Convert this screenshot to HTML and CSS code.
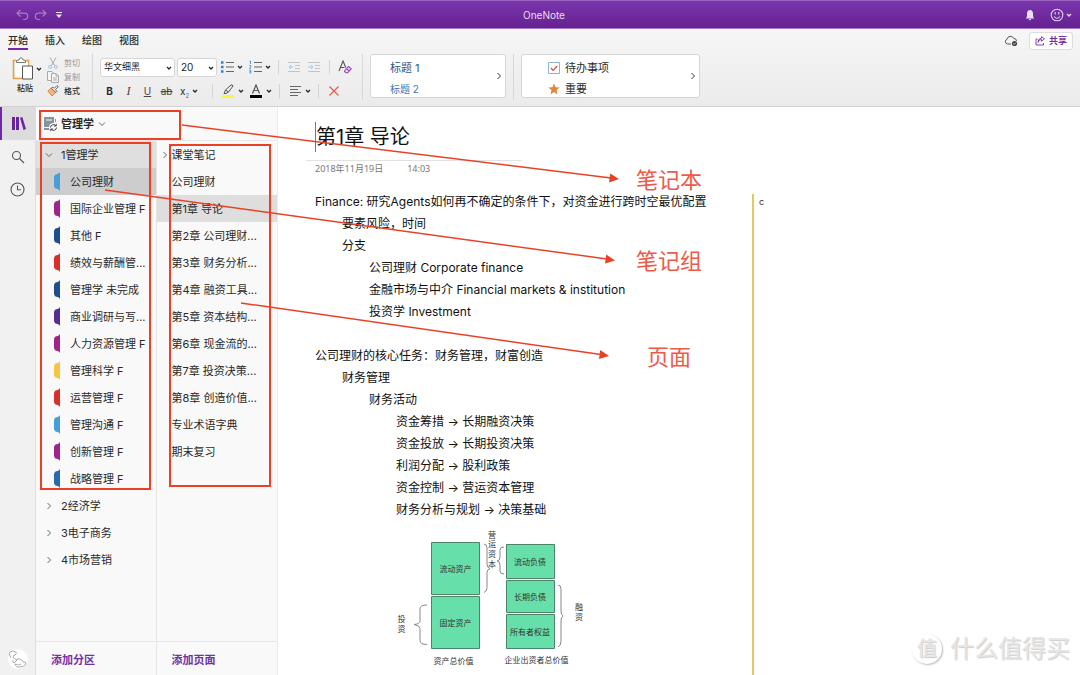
FILE: index.html
```html
<!DOCTYPE html>
<html lang="zh-CN">
<head>
<meta charset="utf-8">
<meta name="viewport" content="width=device-width, initial-scale=1">
<title>OneNote</title>
<link rel="stylesheet" href="styles.css">
</head>
<body>
<svg width="0" height="0" class="defs" aria-hidden="true">
  <symbol id="chev" viewBox="0 0 6 6"><path d="M1 2l2 2 2-2" fill="none" stroke="currentColor" stroke-width="1.3"/></symbol>
  <symbol id="down" viewBox="0 0 8 8"><path d="M1 2.500l3 3 3-3" fill="none" stroke="currentColor"/></symbol>
  <symbol id="right" viewBox="0 0 8 8"><path d="M2.500 1l3 3-3 3" fill="none" stroke="currentColor"/></symbol>
  <symbol id="tab" viewBox="0 0 6 19"><path d="M6 0v19L4.800 17.500 1 16.200 0 14V5L1 2.800 4.800 1.500z" fill="currentColor"/></symbol>
</svg>

<header class="titlebar">
  <div class="quick">
    <button aria-label="撤销"><svg width="13" height="12" viewBox="0 0 13 12" fill="none" stroke="#a67cc9" stroke-width="1.200"><path d="M4.500 1L1 4.200l3.500 3.300M1 4.200h7.500a3 3 0 0 1 0 6.300H7"/></svg></button>
    <button aria-label="重做"><svg width="13" height="12" viewBox="0 0 13 12" fill="none" stroke="#a67cc9" stroke-width="1.200"><path d="M8.500 1L12 4.200 8.500 7.500M12 4.200H4.500a3 3 0 0 0 0 6.300H6"/></svg></button>
    <button aria-label="自定义"><svg width="8" height="8" viewBox="0 0 8 8" fill="#f0e6f8"><path d="M1 1h6v1H1zM1 3.500h6L4 7z"/></svg></button>
  </div>
  <h1 class="app-name">OneNote</h1>
  <div class="account">
    <button aria-label="通知"><svg width="10" height="12" viewBox="0 0 10 12" fill="#ecdff5"><path d="M1 9c.8-.8 1-1.500 1-4.500C2 2.500 3.200 1 5 1s3 1.500 3 3.500C8 7.500 8.200 8.200 9 9v.6H1zM3.700 10h2.600q-.3 1.200-1.300 1.200T3.700 10z"/></svg></button>
    <button class="face" aria-label="反馈"><svg width="14" height="14" viewBox="0 0 14 14" fill="none" stroke="#e3d2f0" stroke-width="1.100"><circle cx="7" cy="7" r="5.800"/><path d="M5.200 4v2.500M8.800 4v2.500M4 8.500q3 3.500 6 0"/></svg><svg width="6" height="6"><use href="#chev"/></svg></button>
  </div>
</header>

<section class="ribbon">
  <div class="tabrow">
    <nav class="tabs">
      <button class="active">开始</button><button>插入</button><button>绘图</button><button>视图</button>
    </nav>
    <div class="sharing">
      <svg width="14" height="12" viewBox="0 0 14 12" fill="none" stroke="#555"><path d="M7 9H3.500A2.500 2.500 0 0 1 3 4.200 3.600 3.600 0 0 1 9.800 3.500 2.600 2.600 0 0 1 12.500 6"/><circle cx="10.500" cy="8.500" r="2.600" fill="#444" stroke="none"/><path d="M9.300 8.500l1 .9 1.500-1.700" stroke="#fff" stroke-width=".7"/></svg>
      <button class="share"><svg width="10" height="10" viewBox="0 0 10 10" fill="none" stroke="#7330a5" stroke-width=".9"><path d="M2.500 3H1v6h7.500V7M3 6.500Q3.500 3.500 6.500 3.500V5.200L9.500 2.800 6.500.6v1.500Q3 2.300 3 6.500z"/></svg>共享</button>
    </div>
  </div>

  <div class="toolbar">
    <div class="clipboard">
      <button class="paste">
        <span class="paste-icon">
          <svg width="22" height="24" viewBox="0 0 22 24" fill="none"><path d="M4 3.500H1.500v18h10M14 3.500h2.500v5" stroke="#e8a050" stroke-width="1.600"/><path d="M3 4v16h8V9h5V5H4z" fill="#fff"/><path d="M4.500 5.500v-2l2.500-.5Q7.300.8 9 .8t2 2.200l2.500.5v2z" fill="#fff" stroke="#666" stroke-width=".9"/><path d="M10.500 9h10v13h-10z" fill="#fff" stroke="#555"/></svg>
          <svg width="6" height="6"><use href="#chev"/></svg>
        </span>
        <span>粘贴</span>
      </button>
      <div class="clip-list">
        <button class="off"><svg width="12" height="12" viewBox="0 0 12 12" fill="none" stroke="#aaa"><path d="M3 .5l4.500 8M9 .5l-4.500 8"/><g stroke="#98bfe0"><circle cx="3.200" cy="9.800" r="1.500"/><circle cx="8.800" cy="9.800" r="1.500"/></g></svg>剪切</button>
        <button class="off"><svg width="12" height="12" viewBox="0 0 12 12" fill="#f5f5f5" stroke="#aaa"><path d="M.5.500h4.500l2 2v7H.5z"/><path d="M4.500 2.500h4.500l2.500 2.500v6.500h-7zM9 2.500V5h2.500M6 7h4M6 9h4"/></svg>复制</button>
        <button><svg width="12" height="12" viewBox="0 0 12 12" fill="#fff" stroke-width=".9"><path d="M5 2.500L.8 6 5 11 9 7z" stroke="#d98435" fill="#f3b57d"/><path d="M4.500 3.500l4.500 4 1-1-1.500-2L11.300 1.600 10 .6 7.300 3.300 5.800 2.300z" stroke="#555"/></svg>格式</button>
      </div>
    </div>
    <div class="rule"></div>
    <div class="format">
      <div class="tools">
        <label class="pick font"><select aria-label="字体"><option>华文细黑</option></select><svg width="6" height="6"><use href="#chev"/></svg></label>
        <label class="pick size"><select aria-label="字号"><option>20</option></select><svg width="6" height="6"><use href="#chev"/></svg></label>
        <button class="menu" aria-label="项目符号"><svg width="14" height="14" viewBox="0 0 14 14" stroke="#666" stroke-width="1.200"><path d="M5 2.500h8M5 7h8M5 11.500h8"/><path d="M0 2.500h2.500M0 7h2.500M0 11.500h2.500" stroke="#3183c8" stroke-width="2.400"/></svg><svg width="6" height="6"><use href="#chev"/></svg></button>
        <button class="menu" aria-label="编号"><svg width="14" height="14" viewBox="0 0 14 14" fill="none" stroke="#666" stroke-width="1.200"><path d="M5 2.500h8M5 7h8M5 11.500h8"/><path d="M.5 1h1v3M.3 5.500h1.500v1.300l-1.300 1.500h1.500M.3 10h1.500v3H.3M.5 11.500h1.300" stroke="#3183c8" stroke-width=".8"/></svg><svg width="6" height="6"><use href="#chev"/></svg></button>
        <i class="sep"></i>
        <button aria-label="减少缩进"><svg width="12" height="12" viewBox="0 0 12 12" fill="none" stroke="#c4c4c4"><path d="M0 1.500h12M7 4.500h5M7 7.500h5M0 10.500h12"/><path d="M5.500 6H1M3 4L1 6l2 2" stroke="#a3c8e6"/></svg></button>
        <button aria-label="增加缩进"><svg width="12" height="12" viewBox="0 0 12 12" fill="none" stroke="#c4c4c4"><path d="M0 1.500h12M7 4.500h5M7 7.500h5M0 10.500h12"/><path d="M0 6h5M3 4l2 2-2 2" stroke="#a3c8e6"/></svg></button>
        <i class="sep"></i>
        <button aria-label="清除格式"><svg width="14" height="14" viewBox="0 0 14 14" fill="none" stroke="#555" stroke-width="1.100"><path d="M1 11L5 1l2.800 6.500M2.500 7.500h4"/><path d="M7 10.300L10.500 6.500l2.700 2.200-3.500 4H8L6.500 11.500zM8.500 8.700l2.700 2.300" stroke="#9b45b5" fill="#f3e3f7"/></svg></button>
      </div>
      <div class="tools">
        <button class="letter"><b>B</b></button>
        <button class="letter"><em>I</em></button>
        <button class="letter"><u>U</u></button>
        <button class="letter"><s>ab</s></button>
        <button class="menu subscript"><span>x<sub>2</sub></span><svg width="6" height="6"><use href="#chev"/></svg></button>
        <i class="sep"></i>
        <button class="menu" aria-label="突出显示"><svg width="14" height="14" viewBox="0 0 14 14" fill="none" stroke="#555"><path d="M0 11h12v3H0z" fill="#fff33b" stroke="none"/><path d="M2 9.500l1.500-3.500L9 1q1.500-.5 2 1L6.500 8 4 9.500zM3.500 6L6.500 8"/></svg><svg width="6" height="6"><use href="#chev"/></svg></button>
        <button class="menu" aria-label="字体颜色"><svg width="14" height="14" viewBox="0 0 14 14" fill="none" stroke="#555" stroke-width="1.200"><path d="M0 11h12v3H0z" fill="#000" stroke="none"/><path d="M2.500 9.500L6 1l3.500 8.500M3.800 6.500h4.400"/></svg><svg width="6" height="6"><use href="#chev"/></svg></button>
        <i class="sep"></i>
        <button class="menu" aria-label="对齐"><svg width="14" height="14" viewBox="0 0 14 14" stroke="#666" stroke-width="1.200"><path d="M1 2.500h11M1 5.500h8M1 8.500h11M1 11.500h8"/></svg><svg width="6" height="6"><use href="#chev"/></svg></button>
        <i class="sep"></i>
        <button aria-label="删除"><svg width="10" height="10" viewBox="0 0 10 10" stroke="#e2574c" stroke-width="1.100"><path d="M.5.500l9 9M9.500.500l-9 9"/></svg></button>
      </div>
    </div>
    <div class="rule"></div>
    <div class="gallery styles">
      <div><button class="h-one">标题 1</button><button class="h-two">标题 2</button></div>
      <button class="more" aria-label="更多样式"><svg width="8" height="8"><use href="#right"/></svg></button>
    </div>
    <div class="rule"></div>
    <div class="gallery tags">
      <div>
        <button><svg width="12" height="12" viewBox="0 0 12 12" fill="#fff"><path d="M.5.500h11v11H.5z" stroke="#8fb5d0"/><path d="M3 6l2 2.300L9.300 4" fill="none" stroke="#d2493c" stroke-width="1.200"/></svg>待办事项</button>
        <button><svg width="12" height="12" viewBox="0 0 12 12"><path d="M6 .3l1.500 3.900 4.300.2-3.300 2.700 1.100 4.300L6 9.100l-3.600 2.300 1.100-4.300L.2 4.400l4.300-.2z" fill="#e2873a"/></svg>重要</button>
      </div>
      <button class="more" aria-label="更多标记"><svg width="8" height="8"><use href="#right"/></svg></button>
    </div>
  </div>
</section>

<main class="workspace">
  <nav class="rail">
    <button class="current" aria-label="笔记本"><svg width="14" height="13" viewBox="0 0 14 13" fill="#6a24a0"><path d="M0 0h3v13H0zM4 0h3v13H4zM8 .8L10.300 0 14 12l-2.500 1z"/></svg></button>
    <button aria-label="搜索"><svg width="14" height="14" viewBox="0 0 14 14" fill="none" stroke="#555" stroke-width="1.100"><circle cx="5.500" cy="5.500" r="4"/><path d="M8.500 8.500L13 13"/></svg></button>
    <button aria-label="最近"><svg width="15" height="15" viewBox="0 0 15 15" fill="none" stroke="#555" stroke-width="1.100"><circle cx="7.500" cy="7.500" r="6.500"/><path d="M7.500 3.500v4.300H11"/></svg></button>
    <button class="avatar" aria-label="帐户"><svg width="20" height="20" viewBox="0 0 20 20" fill="#fff"><circle cx="10" cy="10" r="10"/><path d="M3 9Q0 5 2 3t6 0q1 2-1 3-2 0-2 2 1 2 4 3l-3 3q-2-1-1-3M9 11q0-2 3-1t3 3q3-1 3 2-2 3-6 3-4 1-5-3 4 2 6 0" fill="none" stroke="#999" stroke-width=".8"/></svg></button>
  </nav>

  <aside class="navigator">
    <button class="notebook"><svg width="15" height="16" viewBox="0 0 15 16"><path d="M1 1h10v13H1z" fill="#84949c"/><path d="M12 3h1v3h-1z" fill="#84949c"/><path d="M3 4h6M1 11.500h5" stroke="#f9f9f9"/><circle cx="10.500" cy="11.500" r="4.500" fill="#f9f9f9"/><path d="M7.500 11.500a3 3 0 0 1 5.300-1.800M13.500 11.500a3 3 0 0 1-5.300 1.800M13.200 7.800v2.200H11M7.800 15.200V13H10" fill="none" stroke="#444"/></svg>管理学<svg width="8" height="8"><use href="#down"/></svg></button>
    <div class="columns">
      <div class="column sections">
        <div class="list">
          <button class="group open"><svg width="8" height="8"><use href="#down"/></svg>1管理学</button>
          <button class="section chosen"><svg class="sky" width="6" height="19"><use href="#tab"/></svg>公司理财</button>
          <button class="section"><svg class="magenta" width="6" height="19"><use href="#tab"/></svg>国际企业管理 F</button>
          <button class="section"><svg class="navy" width="6" height="19"><use href="#tab"/></svg>其他 F</button>
          <button class="section"><svg class="red" width="6" height="19"><use href="#tab"/></svg>绩效与薪酬管...</button>
          <button class="section"><svg class="navy" width="6" height="19"><use href="#tab"/></svg>管理学 未完成</button>
          <button class="section"><svg class="violet" width="6" height="19"><use href="#tab"/></svg>商业调研与写...</button>
          <button class="section"><svg class="magenta" width="6" height="19"><use href="#tab"/></svg>人力资源管理 F</button>
          <button class="section"><svg class="yellow" width="6" height="19"><use href="#tab"/></svg>管理科学 F</button>
          <button class="section"><svg class="red" width="6" height="19"><use href="#tab"/></svg>运营管理 F</button>
          <button class="section"><svg class="sky" width="6" height="19"><use href="#tab"/></svg>管理沟通 F</button>
          <button class="section"><svg class="magenta" width="6" height="19"><use href="#tab"/></svg>创新管理 F</button>
          <button class="section"><svg class="blue" width="6" height="19"><use href="#tab"/></svg>战略管理 F</button>
          <button class="group"><svg width="8" height="8"><use href="#right"/></svg>2经济学</button>
          <button class="group"><svg width="8" height="8"><use href="#right"/></svg>3电子商务</button>
          <button class="group"><svg width="8" height="8"><use href="#right"/></svg>4市场营销</button>
        </div>
        <button class="add">添加分区</button>
      </div>
      <div class="column pages">
        <div class="list">
          <button class="parent"><svg width="8" height="8"><use href="#right"/></svg>课堂笔记</button>
          <button>公司理财</button>
          <button class="chosen">第1章 导论</button>
          <button>第2章 公司理财...</button>
          <button>第3章 财务分析...</button>
          <button>第4章 融资工具...</button>
          <button>第5章 资本结构...</button>
          <button>第6章 现金流的...</button>
          <button>第7章 投资决策...</button>
          <button>第8章 创造价值...</button>
          <button>专业术语字典</button>
          <button>期末复习</button>
        </div>
        <button class="add">添加页面</button>
      </div>
    </div>
  </aside>

  <article class="note">
    <header class="note-head">
      <h2>第1章 导论</h2>
      <p><span>2018年11月19日</span><span>14:03</span></p>
    </header>
    <div class="note-body">
      <div class="outline">
        <p>Finance: 研究Agents如何再不确定的条件下，对资金进行跨时空最优配置</p>
        <ul>
          <li>要素风险，时间</li>
          <li>分支
            <ul>
              <li>公司理财 Corporate finance</li>
              <li>金融市场与中介 Financial markets &amp; institution</li>
              <li>投资学 Investment</li>
            </ul>
          </li>
        </ul>
        <p class="after-blank">公司理财的核心任务：财务管理，财富创造</p>
        <ul>
          <li>财务管理
            <ul>
              <li>财务活动
                <ul>
                  <li>资金筹措 → 长期融资决策</li>
                  <li>资金投放 → 长期投资决策</li>
                  <li>利润分配 → 股利政策</li>
                  <li>资金控制 → 营运资本管理</li>
                  <li>财务分析与规划 → 决策基础</li>
                </ul>
              </li>
            </ul>
          </li>
        </ul>
        <svg class="diagram" width="200" height="142" viewBox="390 526 200 142">
          <g fill="#67dfaa" stroke="#4b8468">
            <path d="M431.500 542.500h48v52h-48zM431.500 596.500h48v52h-48zM506.500 544.500h48v34h-48zM506.500 580.500h48v32h-48zM506.500 614.500h48v34h-48z"/>
          </g>
          <g fill="none" stroke="#888">
            <path d="M484 544q3 0 3 4v16q0 4 3 4.500-3 1-3 4v15q0 4-3 5M504 547q-4 0-4 3v7q0 4-3 4 3 0 3 4v6q0 3 4 3M427 605q-7 0-7 4v12q0 3-6 3.500 6 1 6 4v12q0 4 7 4M558 585q3 0 3 4v22q0 4 2 5-2 1-2 5v20q0 5-3 6"/>
          </g>
          <g class="cell">
            <text x="455.500" y="572">流动资产</text><text x="455.500" y="626">固定资产</text>
            <text x="530" y="565">流动负债</text><text x="530" y="600">长期负债</text><text x="530" y="635">所有者权益</text>
            <text x="453.500" y="664">资产总价值</text><text x="536.500" y="663">企业出资者总价值</text>
            <text x="492" y="538">营</text><text x="492" y="547">运</text><text x="492" y="557">资</text><text x="492" y="567">本</text>
            <text x="401.500" y="622">投</text><text x="401.500" y="632">资</text>
            <text x="579" y="610">融</text><text x="579" y="620">资</text>
          </g>
        </svg>
      </div>
      <div class="side-outline">c</div>
    </div>
  </article>
</main>

<svg class="callouts" width="720" height="500" viewBox="0 0 720 500">
  <g fill="none" stroke="#ea4126" stroke-width="2">
    <path d="M40 111h140v28H40zM41 143h109v346H41zM170 145h100v341H170z"/>
    <path d="M182 125L611 178M105 190L607 259M241 303L601 354.500" stroke-width="1.500"/>
  </g>
  <path d="M619 179l-10 3.500 1.200-9zM615 260.500l-10 3 1.200-9zM609 356l-10 3 1.200-9z" fill="#ea4126"/>
  <g class="callout-text"><text x="636" y="188">笔记本</text><text x="636" y="269">笔记组</text><text x="647" y="365">页面</text></g>
</svg>
<div class="watermark"><span class="seal">值</span><span>什么值得买</span></div>
</body>
</html>
```
FILE: styles.css
```css
* { box-sizing: border-box; }
body {
  margin: 0;
  height: 100vh;
  display: flex;
  flex-direction: column;
  position: relative;
  overflow: hidden;
  background: #fff;
  color: #2a2a2a;
  font: 11px/16px Inter, "Noto Sans CJK SC", sans-serif;
}
button {
  display: flex;
  align-items: center;
  padding: 0;
  border: 0;
  background: none;
  color: inherit;
  font: inherit;
  white-space: nowrap;
}
svg { flex: none; display: block; }
h1, h2, p, ul { margin: 0; padding: 0; }
.defs { position: absolute; }

/* Title bar */
.titlebar {
  display: grid;
  grid-template-columns: 1fr auto 1fr;
  align-items: center;
  height: 29px;
  padding: 0 8px 0 16px;
  border-top: 1px solid #9a64bf;
  border-bottom: 1px solid #a878c8;
  background: linear-gradient(#7a35ae, #65218f);
}
.quick { display: flex; gap: 5px; }
.quick button:last-child { margin-left: 3px; }
.app-name { font-size: 10px; font-weight: 400; color: #eadcf4; }
.account { display: flex; justify-content: flex-end; gap: 15px; }
.face { gap: 2px; color: #eadcf4; }

/* Ribbon */
.ribbon {
  height: 78px;
  border-bottom: 1px solid #d2d2d2;
  background: linear-gradient(#f6f6f6, #ebebeb);
}
.tabrow { display: flex; justify-content: space-between; padding: 2px 7px 0 8px; }
.tabs { display: flex; gap: 17px; }
.tabs button {
  height: 19px;
  border-bottom: 2px solid transparent;
  font-size: 10px;
  font-weight: 500;
}
.tabs .active { border-color: #6f28a6; }
.sharing { display: flex; align-items: center; gap: 11px; }
.share {
  height: 18px;
  gap: 4px;
  padding: 0 5px;
  border: 1px solid #dcdcdc;
  border-radius: 3px;
  background: #fff;
  color: #7330a5;
  font-size: 9px;
  font-weight: 700;
}
.toolbar { display: flex; height: 52px; padding: 4px 0 0 12px; }
.rule { width: 1px; height: 46px; margin: 0 7px; background: #d8d8d8; }
.clipboard { display: flex; gap: 5px; width: 73px; font-size: 8px; }
.paste { flex-direction: column; width: 30px; padding-top: 3px; align-items: flex-start; }
.paste > span:last-child { padding-left: 5px; line-height: 14px; font-weight: 500; }
.paste-icon { display: flex; align-items: center; gap: 2px; }
.clip-list { display: grid; grid-template-rows: repeat(3, 14px); padding-top: 2px; }
.clip-list button { gap: 5px; font-weight: 500; }
.clip-list .off { color: #969696; font-weight: 400; }
.format { width: 255px; padding-top: 1px; }
.tools { display: flex; align-items: center; height: 24px; }
.tools button { justify-content: center; width: 20px; height: 20px; }
.tools .menu { justify-content: flex-start; width: 28px; padding-left: 4px; gap: 2px; }
.tools .letter { width: 19px; font-size: 10px; }
.tools .subscript { width: 31px; gap: 3px; font-size: 10px; }
.letter em, .letter u, .letter s { color: #444; }
.letter em { font-family: "Liberation Serif", serif; font-size: 12px; }
sub { font-size: 6px; line-height: 0; color: #3183c8; }
.sep { width: 1px; height: 14px; margin: 0 5px; background: #d4d4d4; }
.pick { position: relative; height: 19px; }
.font { width: 75px; margin-right: 2px; }
.size { width: 40px; }
.pick select {
  width: 100%;
  height: 100%;
  padding: 0 3px;
  appearance: none;
  border: 1px solid #d6d6d6;
  border-radius: 3px;
  background: #fff;
  color: #222;
  font: 9px/16px Inter, "Noto Sans CJK SC", sans-serif;
}
.pick .size, .size select { font-size: 10px; }
.pick svg { position: absolute; right: 3px; top: 7px; }
.gallery {
  display: flex;
  justify-content: space-between;
  align-items: center;
  height: 44px;
  padding-right: 2px;
  border: 1px solid #d6d6d6;
  border-radius: 3px;
  background: #fff;
}
.gallery > div { padding-top: 5px; }
.gallery div button { height: 21px; }
.styles { width: 136px; padding-left: 19px; color: #2b578d; }
.more { color: #333; }
.h-two { font-size: 10px; color: #3f78b8; }
.tags { width: 179px; padding-left: 26px; }
.tags div button { gap: 5px; }

/* Navigation */
.workspace { display: flex; flex: 1; min-height: 0; }
.rail {
  display: flex;
  flex-direction: column;
  width: 36px;
  border-right: 1px solid #dedede;
  background: #f1f1f1;
}
.rail button { justify-content: center; height: 33px; }
.rail .current { border-left: 2px solid #6f28a6; background: #dcdcdc; }
.rail .avatar { margin-top: auto; }
.navigator {
  display: flex;
  flex-direction: column;
  width: 242px;
  border-right: 1px solid #ececec;
  background: #f9f9f9;
}
.notebook {
  height: 34px;
  gap: 3px;
  padding-left: 7px;
  border-bottom: 1px solid #e8e8e8;
  font-weight: 600;
}
.notebook svg:last-child { color: #666; margin-left: 1px; }
.columns { display: grid; grid-template-columns: 1fr 1fr; flex: 1; }
.column { display: flex; flex-direction: column; }
.sections { border-right: 1px solid #e6e6e6; }
.list { flex: 1; }
.list button { width: 100%; height: 27px; }
.pages .list button { padding-left: 15px; }
.pages .list .parent { padding-left: 4px; gap: 3px; }
.pages .chosen { background: #dedede; }
.group { gap: 8px; padding-left: 9px; }
.group svg, .parent svg { color: #666; }
.open { background: #dfdfdf; }
.section { gap: 10px; padding-left: 18px; }
.section.chosen { background: #cdcdcd; }
.sky { color: #469fd8; }
.magenta { color: #9e238c; }
.navy { color: #1f4e8c; }
.red { color: #d92e2a; }
.violet { color: #552e91; }
.yellow { color: #f7c544; }
.blue { color: #2869b0; }
.add {
  height: 34px;
  padding: 2px 0 0 15px;
  border-top: 1px solid #e6e6e6;
  color: #7330a5;
  font-weight: 600;
}

/* Note page */
.note {
  display: flex;
  flex-direction: column;
  flex: 1;
  min-width: 0;
  padding-top: 15px;
  font-size: 12px;
  color: #111;
}
.note-head { width: 216px; margin-left: 28px; }
.note-head h2 {
  margin-left: 9px;
  border-left: 1px solid #777;
  font-size: 20px;
  font-weight: 400;
  line-height: 30px;
}
.note-head p {
  display: flex;
  gap: 24px;
  margin-top: 8px;
  padding-left: 9px;
  border-top: 1px solid #e2e2e2;
  font-family: "Noto Sans", "Noto Sans CJK SC", sans-serif;
  font-size: 9px;
  line-height: 16px;
  color: #777;
}
.note-body { display: flex; flex: 1; min-height: 0; padding-top: 13px; }
.outline { width: 474px; padding: 1px 0 0 37px; line-height: 22px; white-space: nowrap; }
.outline ul { padding-left: 27px; list-style: none; }
.after-blank { margin-top: 22px; }
.diagram { margin: 5px 0 0 75px; }
.cell { font-size: 8px; text-anchor: middle; fill: #333; }
.side-outline {
  margin-top: 4px;
  padding: 0 5px;
  border-left: 2px solid #e5c85e;
  font-size: 9px;
  color: #333;
}

/* Layers above the page */
.callouts { position: absolute; left: 0; top: 0; pointer-events: none; }
.callout-text { font-size: 22px; fill: #ee5a48; }
.watermark {
  position: absolute;
  right: 10px;
  bottom: 10px;
  display: flex;
  align-items: center;
  gap: 8px;
  color: #e6e6e6;
  font-size: 24px;
  line-height: 32px;
  text-shadow: 1px 1px 1px #ccc;
}
.seal {
  width: 30px;
  height: 30px;
  border-radius: 50%;
  box-shadow: 1px 1px 2px #bbb;
  font-size: 20px;
  font-weight: 500;
  line-height: 30px;
  text-align: center;
}
```
